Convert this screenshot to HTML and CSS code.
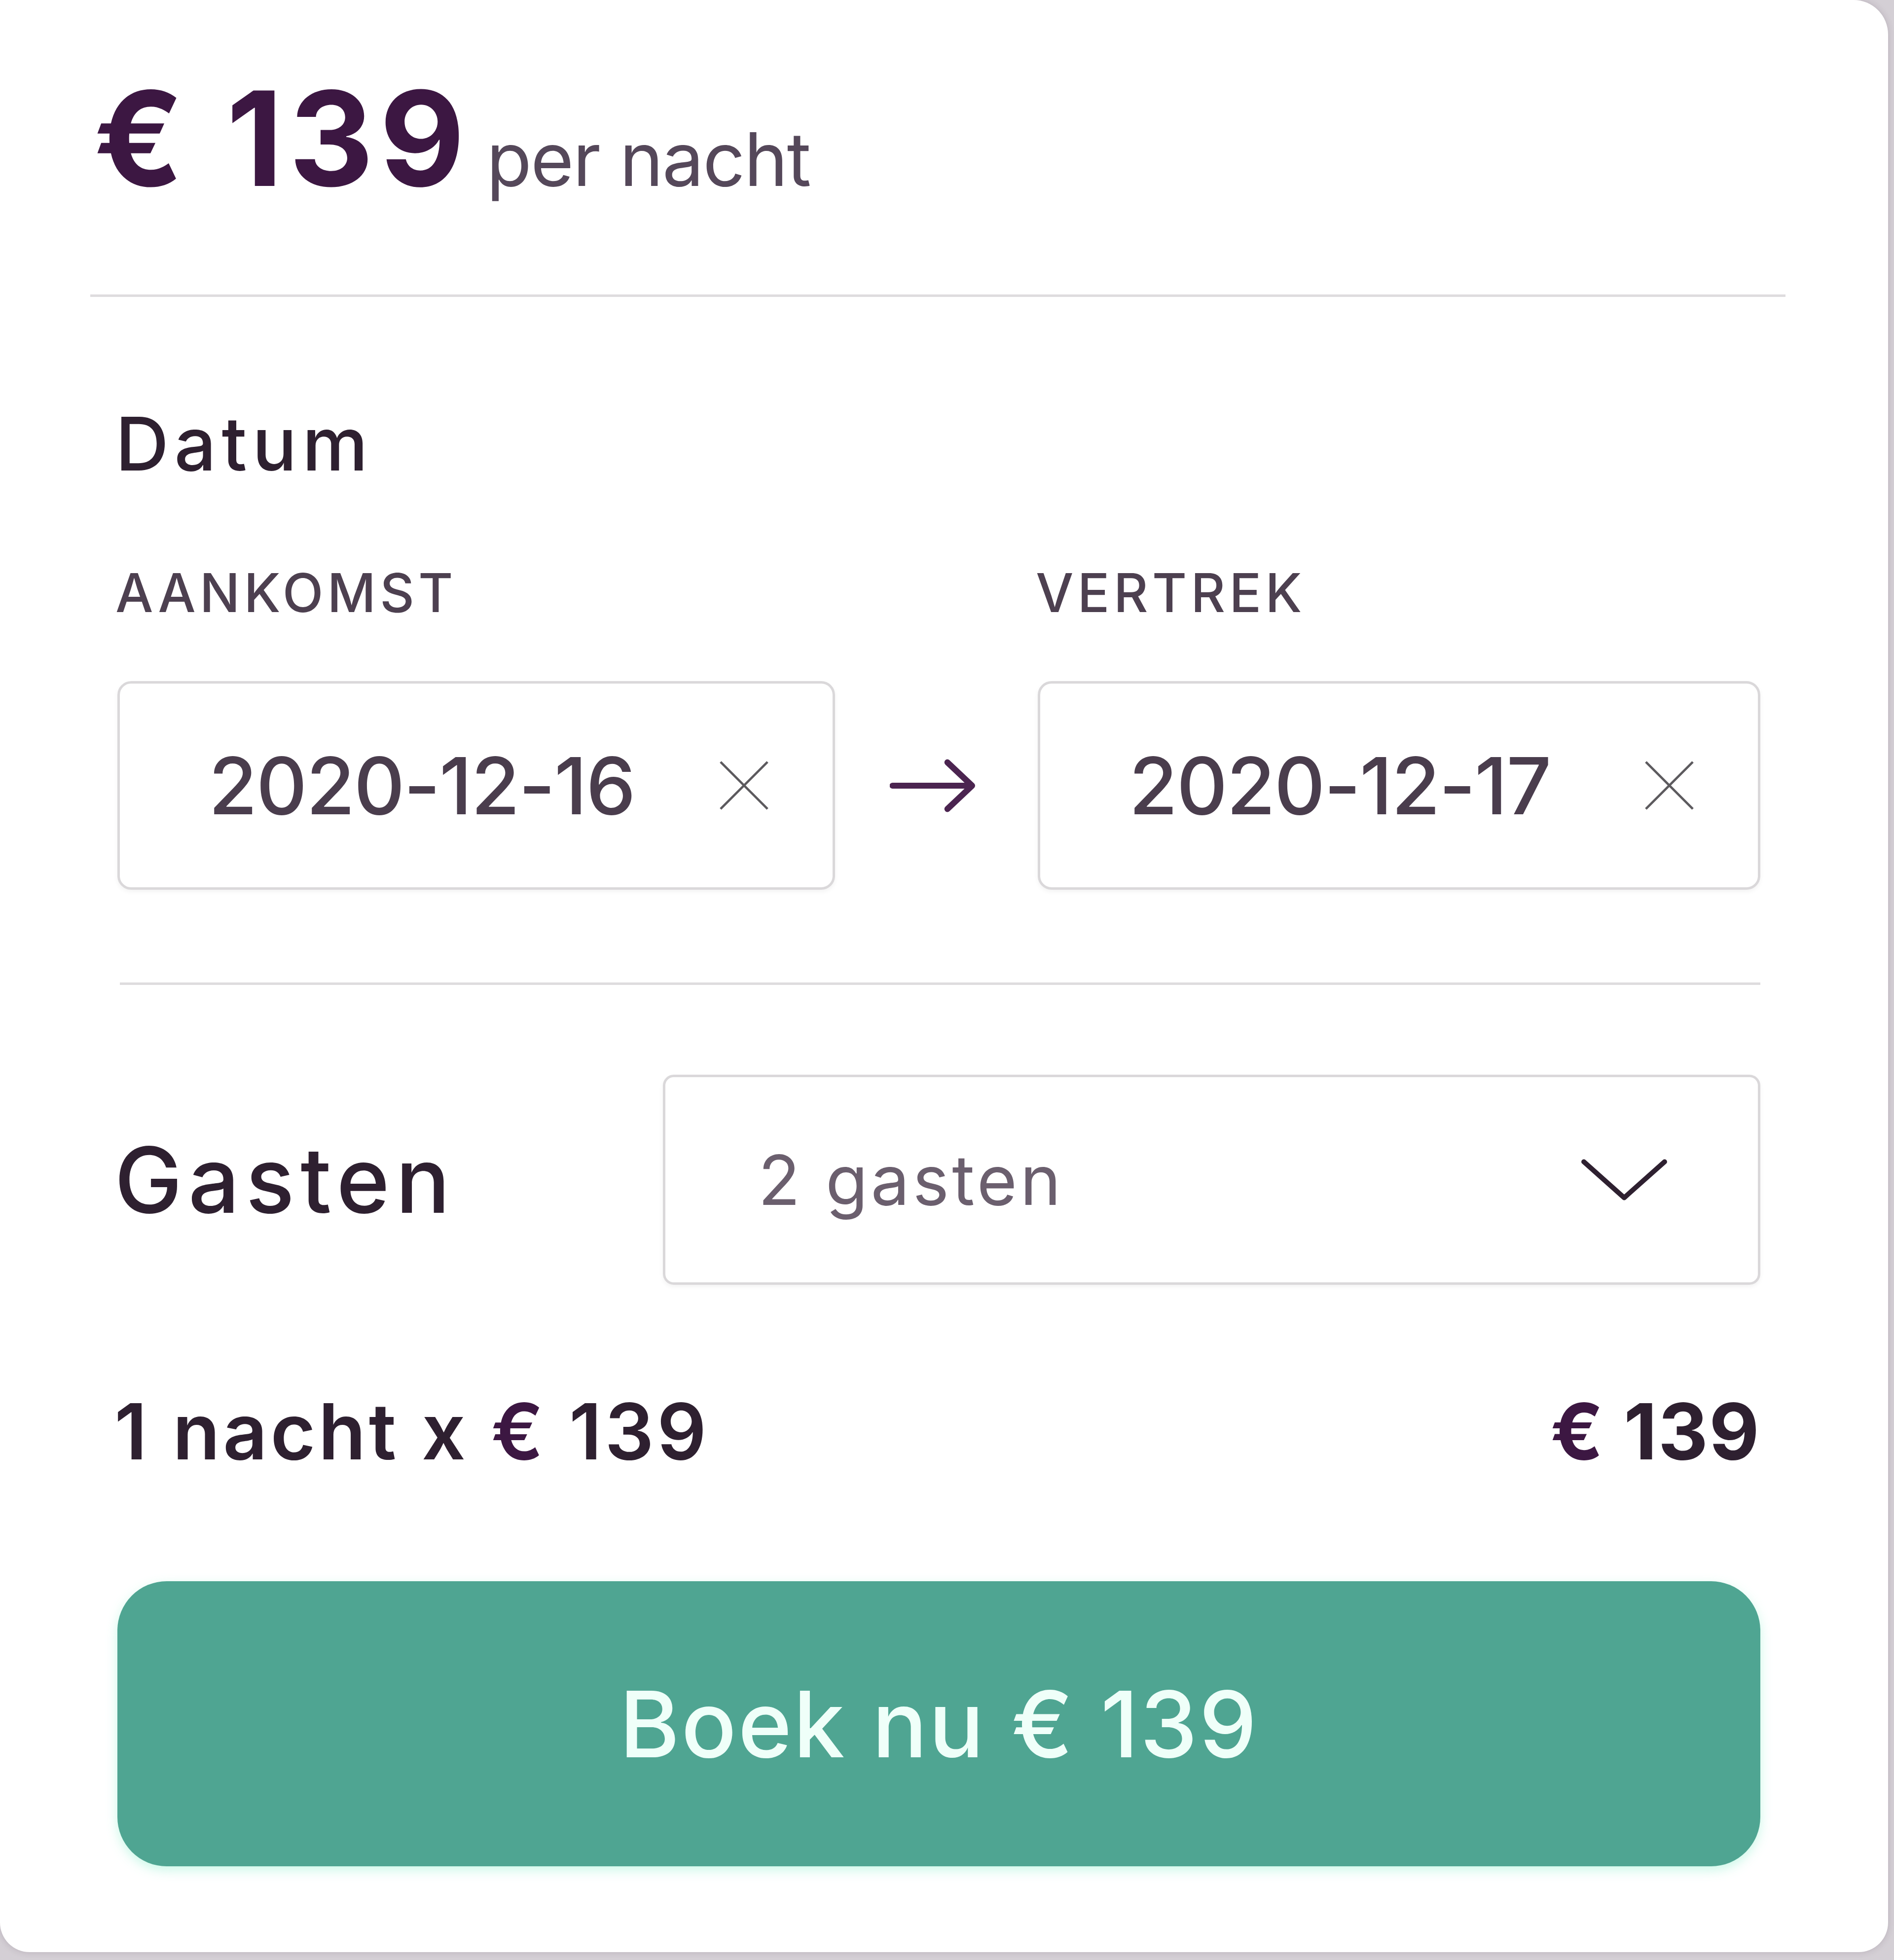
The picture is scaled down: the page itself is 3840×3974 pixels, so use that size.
FILE: index.html
```html
<!DOCTYPE html>
<html lang="nl">
<head>
<meta charset="utf-8">
<title>Boeken</title>
<link rel="stylesheet" href="styles.css">
</head>
<body>
<div class="card">
  <header class="head">
    <div class="price"><span class="amount">€ 139</span><span class="per">per nacht</span></div>
    <hr class="rule rule-top">
  </header>
  <section class="body">
    <h2 class="title">Datum</h2>
    <div class="dates">
      <div class="field">
        <div class="label">AANKOMST</div>
        <div class="input">
          <span class="value">2020-12-16</span>
          <svg class="clear" viewBox="0 0 24 24"><path d="M3 3 L21 21 M21 3 L3 21"/></svg>
        </div>
      </div>
      <div class="arrow-col">
        <svg class="arrow" viewBox="0 0 32 20"><path d="M1 10 H30 M21 1.5 L30 10 L21 18.5"/></svg>
      </div>
      <div class="field">
        <div class="label">VERTREK</div>
        <div class="input">
          <span class="value">2020-12-17</span>
          <svg class="clear" viewBox="0 0 24 24"><path d="M3 3 L21 21 M21 3 L3 21"/></svg>
        </div>
      </div>
    </div>
    <hr class="rule rule-mid">
    <div class="guests">
      <div class="guests-label">Gasten</div>
      <div class="select">
        <span class="select-value">2 gasten</span>
        <svg class="chevron" viewBox="0 0 40 20"><path d="M2 2 L20 18 L38 2"/></svg>
      </div>
    </div>
    <div class="sum">
      <span class="sum-left">1 nacht x <span class="eur">€</span> 139</span>
      <span class="sum-right"><span class="eur">€</span> 139</span>
    </div>
    <button class="book">Boek nu € 139</button>
  </section>
</div>
</body>
</html>
```

FILE: styles.css
```css
html, body {
  margin: 0;
  padding: 0;
}
body {
  width: 3840px;
  height: 3974px;
  background: #d4cfd5;
  font-family: Inter, "Liberation Sans", sans-serif;
  overflow: hidden;
}
.card {
  width: 3828px;
  height: 3958px;
  background: #ffffff;
  border-radius: 0 70px 60px 60px;
  box-shadow: 0 0 14px rgba(60, 40, 60, 0.18);
  box-sizing: border-box;
  display: flex;
  flex-direction: column;
}
.head {
  padding: 147px 208px 0 190px;
}
.price {
  display: flex;
  align-items: baseline;
  line-height: 1;
}
.amount {
  font-size: 266px;
  font-weight: 700;
  color: #3c1742;
  letter-spacing: 12px;
}
.per {
  font-size: 150px;
  font-weight: 400;
  color: #55485a;
  margin-left: 32px;
  letter-spacing: -2px;
}
.rule {
  border: 0;
  height: 5px;
  background: #dedcde;
  margin: 0;
}
.rule-top {
  margin-top: 184px;
  margin-left: -7px;
}
.body {
  padding: 0 259px 0 238px;
  display: flex;
  flex-direction: column;
}
.title {
  margin: 223px 0 0 -4px;
  font-size: 150px;
  font-weight: 500;
  line-height: 1;
  letter-spacing: 11px;
  color: #2e2030;
}
.dates {
  margin-top: 173px;
  display: grid;
  grid-template-columns: 1455px 411px 1fr;
  align-items: end;
}
.label {
  font-size: 108px;
  font-weight: 500;
  line-height: 1;
  letter-spacing: 8px;
  color: #4d4050;
  margin-left: -4px;
  margin-bottom: 125px;
}
.input {
  height: 423px;
  box-sizing: border-box;
  border: 5px solid #dad8da;
  border-radius: 28px;
  box-shadow: 0 4px 10px rgba(0, 0, 0, 0.05);
  display: flex;
  align-items: center;
  justify-content: space-between;
  padding: 0 116px 0 180px;
}
.value {
  font-size: 160px;
  font-weight: 500;
  color: #4a3d4d;
  line-height: 1;
  letter-spacing: -2px;
}
.clear {
  width: 127px;
  height: 127px;
  fill: none;
  stroke: #5c5a5e;
  stroke-width: 0.9;
}
.arrow-col {
  height: 423px;
  display: flex;
  align-items: center;
  justify-content: center;
}
.arrow {
  width: 178px;
  height: 112px;
  fill: none;
  stroke: #4b2450;
  stroke-width: 2.2;
  stroke-linecap: round;
  stroke-linejoin: round;
  margin-left: -12px;
}
.rule-mid {
  margin-top: 188px;
  margin-left: 5px;
}
.guests {
  margin-top: 182px;
  display: grid;
  grid-template-columns: 1106px 1fr;
  align-items: center;
}
.guests-label {
  font-size: 184px;
  font-weight: 500;
  color: #2e2030;
  line-height: 1;
  letter-spacing: 12px;
  margin-left: -6px;
}
.select {
  height: 426px;
  box-sizing: border-box;
  border: 5px solid #dad8da;
  border-radius: 22px;
  box-shadow: 0 4px 10px rgba(0, 0, 0, 0.05);
  display: flex;
  align-items: center;
  justify-content: space-between;
  padding: 0 180px 0 188px;
}
.select-value {
  font-size: 140px;
  font-weight: 400;
  color: #6b5f6e;
  line-height: 1;
  letter-spacing: 6px;
}
.chevron {
  width: 182px;
  height: 94px;
  fill: none;
  stroke: #2e2030;
  stroke-width: 2.2;
  stroke-linecap: round;
  stroke-linejoin: round;
}
.sum {
  margin-top: 219px;
  display: flex;
  justify-content: space-between;
  line-height: 1;
  font-size: 157px;
  color: #2e2030;
}
.sum-left {
  font-weight: 600;
  margin-left: -6px;
  letter-spacing: 6px;
}
.sum-right {
  font-weight: 700;
  letter-spacing: 2px;
}
.eur {
  color: #3c1742;
}
.book {
  margin-top: 225px;
  height: 578px;
  width: 100%;
  border: 0;
  border-radius: 100px;
  background: #4fa592;
  color: #effff9;
  font-family: Inter, "Liberation Sans", sans-serif;
  font-size: 186px;
  font-weight: 500;
  letter-spacing: 3px;
  box-shadow: 0 8px 22px rgba(140, 240, 205, 0.45);
  cursor: pointer;
}
```
